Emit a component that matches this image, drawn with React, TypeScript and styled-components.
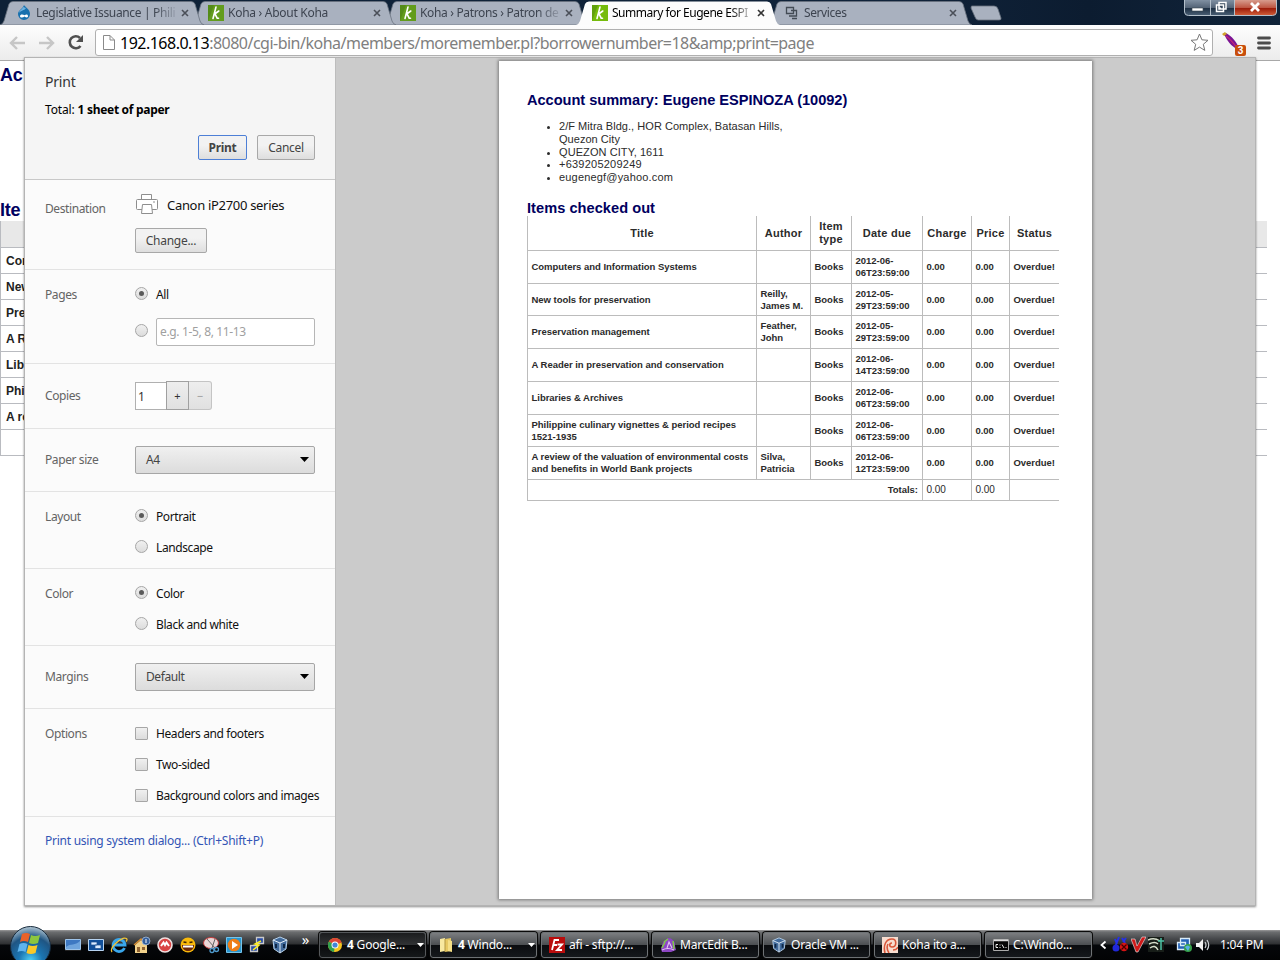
import React from "react";
import styled, { createGlobalStyle, css } from "styled-components";

const UI = `"Noto Sans", "Open Sans", sans-serif`;
const ARIAL = `"Liberation Sans", Arial, sans-serif`;

const GlobalStyle = createGlobalStyle`
  * { box-sizing: border-box; }
  body { margin: 0; background: #fff; font-family: ${UI}; font-size: 12px; overflow: hidden; }
  svg { display: block; flex: none; }
`;

const Screen = styled.div`
  position: relative;
  width: 1280px;
  height: 960px;
  display: flex;
  flex-direction: column;
  background: #fff;
  overflow: hidden;
`;

/* ---------- tab strip ---------- */
const TabStrip = styled.div`
  display: flex;
  height: 25px;
  flex: none;
  background: linear-gradient(90deg, #0e2137, #10233a 70%, #0c1c30 85%, #11243a);
`;
const Tab = styled.div<{ $z: number; $active?: boolean }>`
  position: relative;
  z-index: ${(p) => p.$z};
  display: flex;
  align-items: center;
  width: 204px;
  height: 25px;
  margin-right: -12px;
  padding: 1px 0 0 16px;
  color: ${(p) => (p.$active ? "#000" : "#3d4450")};
`;
const TabShape = styled.svg`
  position: absolute;
  left: 0;
  top: 0;
`;
const Favicon = styled.div`
  position: relative;
  display: flex;
  width: 16px;
  height: 16px;
  margin-right: 4px;
`;
const TabTitle = styled.div<{ $spacing?: number }>`
  position: relative;
  width: 139px;
  margin-right: 6px;
  overflow: hidden;
  white-space: nowrap;
  font-size: 12px;
  line-height: 18px;
  letter-spacing: ${(p) => p.$spacing ?? -0.2}px;
  mask-image: linear-gradient(90deg, #000 118px, transparent 144px);
`;
const NewTab = styled.svg`
  margin: 5px 0 0 10px;
`;
const WindowButtons = styled.svg`
  margin-left: auto;
  margin-right: 2px;
`;

/* ---------- toolbar ---------- */
const Toolbar = styled.div`
  display: flex;
  align-items: center;
  height: 36px;
  flex: none;
  padding: 0 8px 0 9px;
  background: linear-gradient(#fdfdfd, #ececec);
  border-bottom: 1px solid #a8a8a8;
`;
const NavIcons = styled.div`
  display: flex;
  gap: 12px;
  width: 86px;
  align-items: center;
`;
const AddressBar = styled.div`
  display: flex;
  align-items: center;
  width: 1118px;
  height: 27px;
  padding: 0 3px 0 7px;
  background: #fff;
  border: 1px solid #b0b0b0;
  border-radius: 3px;
`;
const Url = styled.div`
  flex: 1;
  margin-left: 5px;
  font-size: 16px;
  line-height: 24px;
  letter-spacing: -0.51px;
  white-space: nowrap;
  color: #808080;
  b { font-weight: 400; color: #000; }
`;
const Extensions = styled.div`
  display: flex;
  align-items: center;
  gap: 11px;
  margin-left: 9px;
`;
const ExtensionIcon = styled.svg`
  margin-top: 4px;
`;

/* ---------- page behind the dialog ---------- */
const BackPage = styled.div`
  flex: 1;
  width: 1267px;
  padding-top: 3px;
  font-family: ${ARIAL};
`;
const BackHeading = styled.div<{ $height: number }>`
  height: ${(p) => p.$height}px;
  font-size: 18px;
  font-weight: 700;
  line-height: 22px;
  letter-spacing: -0.3px;
  color: #00005f;
`;
const BackRow = styled.div<{ $head?: boolean }>`
  height: ${(p) => (p.$head ? 27 : 26)}px;
  padding-left: 5px;
  border-left: 1px solid #b9bbc0;
  border-bottom: 1px solid #b9bbc0;
  background: ${(p) => (p.$head ? "#e8e8e8" : "#fff")};
  font-size: 12px;
  font-weight: 700;
  line-height: 26px;
  color: #222;
`;

/* ---------- print dialog ---------- */
const Dialog = styled.div`
  position: absolute;
  left: 24px;
  top: 57px;
  width: 1232px;
  height: 849px;
  display: flex;
  background: #cbcbcb;
  border: 1px solid #b4b4b4;
  box-shadow: 0 1px 2px rgba(0, 0, 0, 0.45);
`;
const Settings = styled.div`
  width: 311px;
  flex: none;
  display: flex;
  flex-direction: column;
  background: #fbfbfb;
  border-right: 1px solid #bdbdbd;
`;
const SettingsHead = styled.div`
  height: 122px;
  padding: 14px 20px 0;
  background: #f5f5f5;
  border-bottom: 1px solid #c8c8c8;
`;
const Title = styled.div`
  font-size: 14px;
  line-height: 20px;
  letter-spacing: -0.2px;
  color: #333;
`;
const Total = styled.div`
  margin-top: 9px;
  line-height: 18px;
  letter-spacing: -0.15px;
  color: #000;
  b { font-weight: 700; letter-spacing: -0.3px; }
`;
const Buttons = styled.div`
  display: flex;
  justify-content: flex-end;
  gap: 10px;
  margin-top: 16px;
`;
const Button = styled.div<{ $width: number; $primary?: boolean }>`
  width: ${(p) => p.$width}px;
  height: 25px;
  border: 1px solid ${(p) => (p.$primary ? "#4d7fd6" : "#a8a8a8")};
  border-radius: 2px;
  background: linear-gradient(#f2f2f2 40%, #dedede);
  font-weight: ${(p) => (p.$primary ? 700 : 400)};
  line-height: 23px;
  letter-spacing: -0.27px;
  text-align: center;
  color: #444;
`;
const Section = styled.div<{ $height: number; $pad?: number }>`
  display: flex;
  flex: none;
  height: ${(p) => p.$height}px;
  padding: ${(p) => p.$pad ?? 9}px 0 0 20px;
  border-bottom: 1px solid #e3e3e3;
`;
const SectionLabel = styled.div<{ $line?: number }>`
  width: 90px;
  line-height: ${(p) => p.$line ?? 32}px;
  letter-spacing: -0.4px;
  color: #646464;
`;
const Stack = styled.div`
  display: flex;
  flex-direction: column;
`;
const Choice = styled.div<{ $height?: number }>`
  display: flex;
  align-items: center;
  gap: 8px;
  height: ${(p) => p.$height ?? 31}px;
  white-space: nowrap;
  color: #111;
`;
const ChoiceText = styled.span`
  letter-spacing: -0.4px;
`;
const controlFace = css`
  background: linear-gradient(#f0f0f0, #dcdcdc);
  border: 1px solid #a6a6a6;
`;
const RadioDot = styled.span<{ $on?: boolean }>`
  ${controlFace}
  display: flex;
  align-items: center;
  justify-content: center;
  width: 13px;
  height: 13px;
  margin-bottom: 2px;
  border-radius: 50%;
  &::after {
    content: "";
    width: 5px;
    height: 5px;
    border-radius: 50%;
    background: ${(p) => (p.$on ? "#5a5a5a" : "transparent")};
  }
`;
const CheckSquare = styled.span`
  ${controlFace}
  width: 13px;
  height: 13px;
  border-radius: 1px;
`;
const RangeInput = styled.div`
  width: 159px;
  height: 28px;
  margin-top: 2px;
  padding-left: 3px;
  border: 1px solid #b6b6b6;
  border-radius: 2px;
  background: #fff;
  line-height: 26px;
  letter-spacing: -0.35px;
  color: #a0a0a0;
`;
const Printer = styled.div`
  display: flex;
  align-items: center;
  gap: 9px;
  height: 22px;
  margin-bottom: 13px;
  font-size: 13px;
  letter-spacing: -0.31px;
  white-space: nowrap;
  color: #111;
`;
const PrinterName = styled.span`
  padding-top: 2px;
`;
const Stepper = styled.div`
  display: flex;
  height: 29px;
`;
const CopiesInput = styled.div`
  width: 31px;
  height: 28px;
  margin-top: 1px;
  padding-left: 2px;
  border: 1px solid #b0b0b0;
  border-right: 0;
  background: #fff;
  line-height: 27px;
  color: #333;
`;
const StepButton = styled.div<{ $off?: boolean }>`
  width: 23px;
  height: 29px;
  border: 1px solid ${(p) => (p.$off ? "#c4c4c4" : "#a0a0a0")};
  border-left-width: ${(p) => (p.$off ? 0 : 1)}px;
  border-radius: ${(p) => (p.$off ? "0 3px 3px 0" : 0)};
  background: linear-gradient(#eee, #e0e0e0);
  line-height: 28px;
  font-size: 11px;
  text-align: center;
  color: ${(p) => (p.$off ? "#999" : "#333")};
`;
const Select = styled.div`
  ${controlFace}
  display: flex;
  align-items: center;
  justify-content: space-between;
  width: 180px;
  height: 28px;
  padding: 0 5px 1px 10px;
  border-radius: 2px;
  letter-spacing: -0.4px;
  color: #444;
`;
const SystemLink = styled.div`
  padding: 15px 0 0 20px;
  line-height: 18px;
  letter-spacing: -0.25px;
  color: #3355b5;
`;

/* ---------- preview ---------- */
const Preview = styled.div`
  flex: 1;
  padding: 3px 0 0 163px;
`;
const Paper = styled.div`
  width: 593px;
  height: 838px;
  padding: 30px 28px 0;
  background: #fff;
  box-shadow: 0 0 3px 1px rgba(0, 0, 0, 0.4);
  font-family: ${ARIAL};
  color: #2b2b2b;
`;
const DocHeading = styled.div<{ $height: number; $spacing: number }>`
  height: ${(p) => p.$height}px;
  font-size: 14.6px;
  font-weight: 700;
  line-height: 18px;
  letter-spacing: ${(p) => p.$spacing}px;
  white-space: nowrap;
  color: #00005f;
`;
const Contact = styled.ul`
  height: 79px;
  margin: 0;
  padding: 0 0 0 32px;
  list-style: none;
  font-size: 11px;
  line-height: 12.8px;
`;
const ContactItem = styled.li<{ $spacing?: number }>`
  position: relative;
  white-space: pre;
  letter-spacing: ${(p) => p.$spacing ?? 0.18}px;
  &::before {
    content: "";
    position: absolute;
    left: -12px;
    top: 6px;
    width: 3px;
    height: 3px;
    border-radius: 50%;
    background: #2b2b2b;
  }
`;
const Row = styled.div<{ $height: number; $total?: boolean }>`
  display: grid;
  grid-template-columns: ${(p) => (p.$total ? "395px" : "229px 54px 41px 71px")} 49px 38px 50px;
  width: 532px;
  height: ${(p) => p.$height}px;
  border-bottom: 1px solid #bcbcbc;
`;
const Cell = styled.div<{ $head?: boolean; $plain?: boolean; $right?: boolean }>`
  display: flex;
  align-items: center;
  justify-content: ${(p) => (p.$head ? "center" : p.$right ? "flex-end" : "flex-start")};
  padding: ${(p) => (p.$head ? "0" : "0 4px 0 3.5px")};
  border-left: 1px solid #bcbcbc;
  font-size: ${(p) => (p.$head ? 11 : p.$plain ? 10 : 9.5)}px;
  font-weight: ${(p) => (p.$plain ? 400 : 700)};
  line-height: ${(p) => (p.$head ? 13 : 12)}px;
  letter-spacing: ${(p) => (p.$head ? 0.25 : -0.03)}px;
  text-align: ${(p) => (p.$head ? "center" : "left")};
  white-space: pre;
`;

/* ---------- taskbar ---------- */
const Taskbar = styled.div`
  position: relative;
  z-index: 1;
  display: flex;
  align-items: center;
  height: 30px;
  flex: none;
  background: linear-gradient(#9a9a9a 0, #6b6d6f 2px, #4a4c4f 8px, #2e3032 14px, #05070a 15px, #020304);
`;
const StartOrb = styled.svg`
  align-self: flex-end;
  margin: 0 12px 0 8px;
`;
const QuickLaunch = styled.div`
  display: flex;
  gap: 5px;
  width: 230px;
`;
const More = styled.div`
  width: 23px;
  margin-top: -12px;
  font-size: 15px;
  line-height: 16px;
  text-align: center;
  color: #fff;
`;
const Tasks = styled.div`
  display: flex;
  gap: 4px;
  margin-left: 2px;
`;
const Task = styled.div<{ $active?: boolean }>`
  display: flex;
  align-items: center;
  gap: 4px;
  width: 107px;
  height: 26px;
  padding-left: 7px;
  border: 1px solid ${(p) => (p.$active ? "#55585b" : "#6e7275")};
  border-radius: 3px;
  background: ${(p) =>
    p.$active
      ? "linear-gradient(#1b1c1e, #303234 48%, #0a0b0d 52%, #15181a)"
      : "linear-gradient(#7b7d80, #4d5053 48%, #0b0d10 52%, #15181c)"};
  box-shadow: 0 0 0 1px #0a0a0a;
  white-space: nowrap;
  color: #fff;
`;
const TaskText = styled.span`
  padding-bottom: 1px;
  letter-spacing: -0.2px;
`;
const TaskArrow = styled.svg`
  margin-left: auto;
  margin-right: 1px;
`;
const Tray = styled.div`
  display: flex;
  align-items: center;
  gap: 2px;
  margin-left: 7px;
  color: #fff;
`;
const Clock = styled.div`
  margin-left: 7px;
  line-height: 18px;
  white-space: nowrap;
  letter-spacing: -0.25px;
`;

/* ---------- icons ---------- */
const DrupalIcon = () => (
  <svg width="16" height="16" viewBox="0 0 16 16">
    <path d="M8 0c1 2 6 4 6 9a6 6 0 0 1-12 0c0-4 5-5 6-9z" fill="#1770ae" />
    <path d="M7 2c0 2-4 3-4 6 2-3 5-2 7-5z" fill="#6fb3e0" />
    <path d="M4 11c0-2 3-2 4.500-.8C10 9 12 9 12 11s-2 1.500-3.500.5C7 13 4 13 4 11z" fill="#fff" />
  </svg>
);
const KohaIcon = ({ bright }: { bright?: boolean }) => (
  <svg width="16" height="16" viewBox="0 0 16 16">
    <rect width="16" height="16" fill={bright ? "#76bc0c" : "#629c1c"} />
    <path d="M0 16L6 0H0z" fill="#3c6e10" opacity=".35" />
    <path d="M8 2L5 13.500M6 9.500L10.800 6M7 8.800L9.200 13.200h1.300" stroke="#fff" strokeWidth="1.600" fill="none" strokeLinecap="round" />
  </svg>
);
const ServicesIcon = () => (
  <svg width="16" height="16" viewBox="0 0 16 16" fill="none" stroke="#434b55" strokeWidth="1.300">
    <path d="M2.500 2.500h7v6h-7zM7 5.500h5.500v5.500H7M5 11h2M8 13.500h5" />
  </svg>
);
const CloseIcon = ({ dark }: { dark?: boolean }) => (
  <svg width="8" height="8" viewBox="0 0 8 8" style={{ position: "relative" }}>
    <path d="M1 1l6 6M7 1L1 7" stroke={dark ? "#333" : "#4a4f58"} strokeWidth="1.600" />
  </svg>
);
const PrinterIcon = () => (
  <svg width="23" height="22" viewBox="0 0 23 22" fill="#fff" stroke="#8e8e8e">
    <path d="M6.500 6.500v-5h10v5" />
    <rect x="1.500" y="6.500" width="21" height="10" rx="1" />
    <path d="M7.500 11.500h9l1 9h-11z" />
    <path d="M18 9h2" />
  </svg>
);
const Cube = ({ size = 18 }: { size?: number }) => (
  <svg width={size} height={size} viewBox="0 0 18 18">
    <path d="M9 1l7 3-1 9-6 4-6-4L2 4z" fill="#416a9b" stroke="#b9d3ec" />
    <path d="M2 4l7 3 7-3M9 7v10" stroke="#e5f0fa" fill="none" />
    <path d="M5 8v4M13 8v4" stroke="#0d2748" strokeWidth="2" />
  </svg>
);
const quick = [
  <svg key="desk" width="18" height="18" viewBox="0 0 18 18"><path d="M1.500 3.500h15v10h-15z" fill="#3e78c2" stroke="#9ec4ea" /><path d="M2 11c5-4 9-1 14-6v8H2z" fill="#6fa4dd" /><path d="M1 14.500h16" stroke="#222" /></svg>,
  <svg key="switch" width="18" height="18" viewBox="0 0 18 18"><path d="M1.500 3.500h15v11h-15z" fill="#11509b" stroke="#b7d3f0" /><path d="M4 6h6v3H4zM8 9h6v3.500H8z" fill="#dcecff" stroke="#1b4d8c" strokeWidth=".7" /></svg>,
  <svg key="ie" width="18" height="18" viewBox="0 0 18 18" fill="none"><path d="M14.500 12a6 6 0 1 1 .5-3H4.500" stroke="#39a7ec" strokeWidth="2.800" /><path d="M2 16C-1 12 12 0 16.500 2.500c1 .7.300 2-.5 3" stroke="#f2c537" strokeWidth="1.300" /></svg>,
  <svg key="home" width="18" height="18" viewBox="0 0 18 18"><path d="M2 9l6-5 6 5v8H2z" fill="#f2d28b" /><path d="M1 9l7-6 6 6" stroke="#d48c32" fill="none" strokeWidth="1.500" /><path d="M4 11h3v5H4zM9 11h3v3H9z" fill="#8f6331" /><circle cx="13" cy="5" r="4" fill="#345f9c" stroke="#b4cce8" strokeWidth=".7" /><path d="M13 3v4" stroke="#fff" /></svg>,
  <svg key="red" width="18" height="18" viewBox="0 0 18 18"><circle cx="9" cy="9" r="7" fill="#d94343" stroke="#efdfdf" strokeWidth="1.600" /><path d="M5 10l2.500-3.500L9 9l1.500-2.500L13 10" stroke="#fff" strokeWidth="2" fill="none" /></svg>,
  <svg key="smile" width="18" height="18" viewBox="0 0 18 18"><circle cx="9" cy="9" r="7.500" fill="#f8b90b" /><path d="M3 9h12c0 8-12 8-12 0z" fill="#6e2808" /><path d="M4 9.500h10v2H4z" fill="#fff" /><path d="M4.500 6l3 .5M13.500 6l-3 .5" stroke="#3d2205" strokeWidth="1.500" /></svg>,
  <svg key="snip" width="18" height="18" viewBox="0 0 18 18"><ellipse cx="9" cy="7" rx="7.500" ry="5.500" fill="#ead7d7" stroke="#c33c3c" /><path d="M5 3l8 9M13 3l-3 9" stroke="#666" /><circle cx="10" cy="14.500" r="2" fill="none" stroke="#4f9acc" strokeWidth="1.300" /><circle cx="14.500" cy="13.500" r="2" fill="none" stroke="#4f9acc" strokeWidth="1.300" /></svg>,
  <svg key="play" width="18" height="18" viewBox="0 0 18 18"><path d="M1.500 1.500h15v15h-15z" fill="#2995cf" stroke="#75c4eb" /><circle cx="9" cy="9" r="6.300" fill="#ee7d17" /><path d="M7 5l6 4-6 4z" fill="#fff" /></svg>,
  <svg key="putty" width="18" height="18" viewBox="0 0 18 18"><path d="M8.500 1.500h7v6h-7zM2.500 9.500h7v6h-7z" fill="#284da8" stroke="#c9c9c9" strokeWidth="1.300" /><path d="M13 5L7 8l4 1-6 5" stroke="#ffed22" fill="none" strokeWidth="1.500" /></svg>,
  <Cube key="cube" />,
];
const ChromeIcon = () => (
  <svg width="16" height="16" viewBox="0 0 16 16">
    <circle cx="8" cy="8" r="7" fill="#f4c420" />
    <path d="M8 8L1.900 4.500A7 7 0 0 1 14.600 5.500z" fill="#dc4537" />
    <path d="M8 8L1.900 4.500A7 7 0 0 0 7 14.900z" fill="#2fa14f" />
    <circle cx="8" cy="8" r="3.500" fill="#fff" />
    <circle cx="8" cy="8" r="2.600" fill="#4285d8" />
  </svg>
);
const FolderIcon = () => (
  <svg width="16" height="16" viewBox="0 0 16 16">
    <path d="M2 2l5-1v13l-5 1z" fill="#f8e9a0" /><path d="M7 2l6-1v13l-6 1z" fill="#e7c962" /><path d="M7 2v13" stroke="#b39842" /><path d="M10 3l4 1v11l-4-1z" fill="#f5df86" />
  </svg>
);
const FzIcon = () => (
  <svg width="16" height="16" viewBox="0 0 16 16">
    <rect width="16" height="16" fill="#b90d0d" />
    <path d="M3 13L5.500 3H10M4 8h4M8.500 7.500H13L8 13h5" stroke="#fff" strokeWidth="1.800" fill="none" />
  </svg>
);
const MarcIcon = () => (
  <svg width="16" height="16" viewBox="0 0 16 16">
    <path d="M8 1a7 7 0 0 1 7 8l1 4-5 2H2l-1-3 2-7z" fill="#8d46c4" />
    <path d="M4 5l4-3M2 11l3-6M13 4l1 8" stroke="#7fce45" strokeWidth="1.500" fill="none" />
    <path d="M7 11l2-6 3 6M2 13q6-3 12 0" stroke="#e3c4f4" strokeWidth="1.100" fill="none" />
  </svg>
);
const SwirlIcon = () => (
  <svg width="16" height="16" viewBox="0 0 16 16">
    <rect width="16" height="16" fill="#f7ddd0" /><path d="M3 16C1 8 4 2 10 2c5 0 5 8 0 8-3 0-3-4 0-4M7 16c-2-3-2-7-1-9M11 13c2 0 4-1 5-3" stroke="#d9573a" strokeWidth="1.600" fill="none" />
  </svg>
);
const CmdIcon = () => (
  <svg width="16" height="16" viewBox="0 0 16 16">
    <path d="M.5 2.500h15v11H.5z" fill="#050505" stroke="#aaa" /><path d="M1 3.500h14" stroke="#ddd" strokeWidth="1.500" /><path d="M5 7.500H3v3h2M7 7.500v1M7 10v1M9 7.500l2 3.500M13 10v1" stroke="#eee" fill="none" />
  </svg>
);

const tabs = [
  { title: "Legislative Issuance | Phili", icon: <DrupalIcon />, spacing: -0.35 },
  { title: "Koha › About Koha", icon: <KohaIcon />, spacing: -0.28 },
  { title: "Koha › Patrons › Patron de", icon: <KohaIcon />, spacing: -0.34 },
  { title: "Summary for Eugene ESPI", icon: <KohaIcon bright />, spacing: -0.48, active: true },
  { title: "Services", icon: <ServicesIcon />, spacing: -0.4 },
];
const backRows = ["Con", "New", "Pre", "A R", "Libr", "Phil", "A re", ""];
const loans = [
  { h: 33, title: "Computers and Information Systems", author: "", due: "2012-06-\n06T23:59:00" },
  { h: 32, title: "New tools for preservation", author: "Reilly,\nJames M.", due: "2012-05-\n29T23:59:00" },
  { h: 33, title: "Preservation management", author: "Feather,\nJohn", due: "2012-05-\n29T23:59:00" },
  { h: 33, title: "A Reader in preservation and conservation", author: "", due: "2012-06-\n14T23:59:00" },
  { h: 33, title: "Libraries & Archives", author: "", due: "2012-06-\n06T23:59:00" },
  { h: 32, title: "Philippine culinary vignettes & period recipes\n1521-1935", author: "", due: "2012-06-\n06T23:59:00" },
  { h: 33, title: "A review of the valuation of environmental costs\nand benefits in World Bank projects", author: "Silva,\nPatricia", due: "2012-06-\n12T23:59:00" },
];
const tasks = [
  { icon: <ChromeIcon />, count: "4", text: "Google...", active: true, arrow: true },
  { icon: <FolderIcon />, count: "4", text: "Windo...", arrow: true },
  { icon: <FzIcon />, text: "afi - sftp://..." },
  { icon: <MarcIcon />, text: "MarcEdit B..." },
  { icon: <Cube size={16} />, text: "Oracle VM ..." },
  { icon: <SwirlIcon />, text: "Koha ito a..." },
  { icon: <CmdIcon />, text: "C:\\Windo..." },
];

const Radio = ({ on, label }: { on?: boolean; label: string }) => (
  <Choice>
    <RadioDot $on={on} />
    <ChoiceText>{label}</ChoiceText>
  </Choice>
);
const Check = ({ label }: { label: string }) => (
  <Choice>
    <CheckSquare />
    <ChoiceText>{label}</ChoiceText>
  </Choice>
);
const Dropdown = ({ value }: { value: string }) => (
  <Select>
    {value}
    <svg width="9" height="5" viewBox="0 0 9 5"><path d="M0 0h9L4.500 5z" fill="#000" /></svg>
  </Select>
);

export default function App() {
  return (
    <>
      <GlobalStyle />
      <Screen>
        <TabStrip>
          {tabs.map((t, i) => (
            <Tab key={t.title} $z={t.active ? 9 : 6 - i} $active={t.active}>
              <TabShape width="204" height="25" viewBox="0 0 204 25">
                <path
                  d="M0 25Q3 24 4 21L9 4Q10 1.500 13 1.500H191Q194 1.500 195 4L200 21Q201 24 204 25Z"
                  fill={t.active ? "#fcfcfc" : "#a9b1bf"}
                  stroke={t.active ? "#fff" : "#69727f"}
                  strokeWidth={t.active ? 0 : 0.8}
                />
              </TabShape>
              <Favicon>{t.icon}</Favicon>
              <TabTitle $spacing={t.spacing}>{t.title}</TabTitle>
              <CloseIcon dark={t.active} />
            </Tab>
          ))}
          <NewTab width="32" height="16" viewBox="0 0 32 16">
            <path d="M1.500 1H24q3 0 4 3l3 9q.5 2-2 2H8q-2 0-3-3L1 3z" fill="#a9b1bf" stroke="#69727f" strokeWidth=".8" />
          </NewTab>
          <WindowButtons width="95" height="18" viewBox="0 0 95 18">
            <defs>
              <linearGradient id="glass" x1="0" x2="0" y1="0" y2="1">
                <stop offset="0" stopColor="#8090a2" /><stop offset=".5" stopColor="#536376" /><stop offset=".55" stopColor="#1e3044" /><stop offset="1" stopColor="#4b6076" />
              </linearGradient>
              <linearGradient id="red" x1="0" x2="0" y1="0" y2="1">
                <stop offset="0" stopColor="#d79c8d" /><stop offset=".5" stopColor="#bd5541" /><stop offset=".55" stopColor="#9d1d0a" /><stop offset="1" stopColor="#d3603b" />
              </linearGradient>
            </defs>
            <path d="M1.500 0v12q0 3.500 4 3.500H27.500V0z" fill="url(#glass)" />
            <path d="M27.500 0h24v15.500h-24z" fill="url(#glass)" />
            <path d="M51.500 0h42v12q0 3.500-4 3.500h-38z" fill="url(#red)" />
            <path d="M1.500 0v12q0 3.500 4 3.500h84q4 0 4-3.500V0M27.500 0v15M51.500 0v15" fill="none" stroke="#b4c0cb" />
            <path d="M9 8h11v3H9z" fill="#fff" stroke="#3b4652" strokeWidth=".6" />
            <path d="M36 2.500h7v6.500h-7zM33.500 5h7v6.500h-7z" fill="#36485b" stroke="#fff" strokeWidth="1.500" />
            <path d="M36 7.500h2v1.500h-2z" fill="#fff" />
            <path d="M68 3l8 8M76 3l-8 8" stroke="#fff" strokeWidth="2.800" />
          </WindowButtons>
        </TabStrip>

        <Toolbar>
          <NavIcons>
            <svg width="17" height="16" viewBox="0 0 17 16" fill="none" stroke="#c6c6c6" strokeWidth="2.400"><path d="M16 8H3M8 2L2 8l6 6" /></svg>
            <svg width="17" height="16" viewBox="0 0 17 16" fill="none" stroke="#c6c6c6" strokeWidth="2.400"><path d="M1 8h13M9 2l6 6-6 6" /></svg>
            <svg width="18" height="17" viewBox="0 0 18 17"><path d="M13.500 12A6 6 0 1 1 13 4" fill="none" stroke="#505050" strokeWidth="2.600" /><path d="M16 1v7H9z" fill="#505050" /></svg>
          </NavIcons>
          <AddressBar>
            <svg width="12" height="15" viewBox="0 0 12 15" fill="#fff" stroke="#8a8a8a"><path d="M.5.500h6.500l4.500 4.500v9.500H.5zM7 .5V5h4.500" /></svg>
            <Url><b>192.168.0.13</b>{":8080/cgi-bin/koha/members/moremember.pl?borrowernumber=18&amp;print=page"}</Url>
            <svg width="19" height="19" viewBox="0 0 19 19"><path d="M9.500 1l2.400 5.800 6.100.5-4.700 4 1.500 6.100-5.300-3.300-5.300 3.300 1.500-6.100-4.700-4 6.100-.5z" fill="#fff" stroke="#777" /></svg>
          </AddressBar>
          <Extensions>
            <ExtensionIcon width="24" height="25" viewBox="0 0 24 25">
              <path d="M1 2l3-1c5 3 12 9 13 17-5-2-11-7-14-14z" fill="#7a1494" /><path d="M4 4c4 3 8 8 11 12" stroke="#c0267d" strokeWidth="1.500" /><path d="M0 2l3-2 2 2-3 2z" fill="#d0a12c" />
              <rect x="13" y="13" width="11" height="11" rx="2" fill="#c84e0c" />
              <text x="18.500" y="22" fontFamily="Liberation Sans, sans-serif" fontSize="10" fontWeight="700" fill="#fff" textAnchor="middle">3</text>
            </ExtensionIcon>
            <svg width="14" height="14" viewBox="0 0 14 14"><path d="M1.500 2h11M1.500 7h11M1.500 12h11" stroke="#4c4c4c" strokeWidth="2.800" strokeLinecap="round" /></svg>
          </Extensions>
        </Toolbar>

        <BackPage>
          <BackHeading $height={135}>Ac</BackHeading>
          <BackHeading $height={22}>Ite</BackHeading>
          <BackRow $head />
          {backRows.map((r, i) => <BackRow key={i}>{r}</BackRow>)}
        </BackPage>

        <Dialog>
          <Settings>
            <SettingsHead>
              <Title>Print</Title>
              <Total>Total: <b>1 sheet of paper</b></Total>
              <Buttons>
                <Button $width={49} $primary>Print</Button>
                <Button $width={58}>Cancel</Button>
              </Buttons>
            </SettingsHead>
            <Section $height={90} $pad={13}>
              <SectionLabel>Destination</SectionLabel>
              <Stack>
                <Printer><PrinterIcon /><PrinterName>Canon iP2700 series</PrinterName></Printer>
                <Button $width={72}>Change...</Button>
              </Stack>
            </Section>
            <Section $height={94}>
              <SectionLabel>Pages</SectionLabel>
              <Stack>
                <Radio on label="All" />
                <Choice $height={42}><RadioDot /><RangeInput>e.g. 1-5, 8, 11-13</RangeInput></Choice>
              </Stack>
            </Section>
            <Section $height={65} $pad={17}>
              <SectionLabel $line={30}>Copies</SectionLabel>
              <Stepper>
                <CopiesInput>1</CopiesInput>
                <StepButton>+</StepButton>
                <StepButton $off>−</StepButton>
              </Stepper>
            </Section>
            <Section $height={63} $pad={17}>
              <SectionLabel $line={28}>Paper size</SectionLabel>
              <Dropdown value="A4" />
            </Section>
            <Section $height={77}>
              <SectionLabel>Layout</SectionLabel>
              <Stack><Radio on label="Portrait" /><Radio label="Landscape" /></Stack>
            </Section>
            <Section $height={77}>
              <SectionLabel>Color</SectionLabel>
              <Stack><Radio on label="Color" /><Radio label="Black and white" /></Stack>
            </Section>
            <Section $height={63} $pad={17}>
              <SectionLabel $line={28}>Margins</SectionLabel>
              <Dropdown value="Default" />
            </Section>
            <Section $height={108}>
              <SectionLabel>Options</SectionLabel>
              <Stack>
                <Check label="Headers and footers" />
                <Check label="Two-sided" />
                <Check label="Background colors and images" />
              </Stack>
            </Section>
            <SystemLink>Print using system dialog... (Ctrl+Shift+P)</SystemLink>
          </Settings>

          <Preview>
            <Paper>
              <DocHeading $height={29} $spacing={-0.03}>Account summary: Eugene ESPINOZA (10092)</DocHeading>
              <Contact>
                <ContactItem $spacing={0.04}>{"2/F Mitra Bldg., HOR Complex, Batasan Hills,\nQuezon City"}</ContactItem>
                <ContactItem $spacing={0.08}>QUEZON CITY, 1611</ContactItem>
                <ContactItem $spacing={0.23}>+639205209249</ContactItem>
                <ContactItem>eugenegf@yahoo.com</ContactItem>
              </Contact>
              <DocHeading $height={17} $spacing={0.04}>Items checked out</DocHeading>
              <Row $height={35}>
                {["Title", "Author", "Item\ntype", "Date due", "Charge", "Price", "Status"].map((h) => <Cell key={h} $head>{h}</Cell>)}
              </Row>
              {loans.map((l) => (
                <Row key={l.title} $height={l.h}>
                  <Cell>{l.title}</Cell>
                  <Cell>{l.author}</Cell>
                  <Cell>Books</Cell>
                  <Cell>{l.due}</Cell>
                  <Cell>0.00</Cell>
                  <Cell>0.00</Cell>
                  <Cell>Overdue!</Cell>
                </Row>
              ))}
              <Row $height={21} $total>
                <Cell $right>Totals:</Cell>
                <Cell $plain>0.00</Cell>
                <Cell $plain>0.00</Cell>
                <Cell />
              </Row>
            </Paper>
          </Preview>
        </Dialog>

        <Taskbar>
          <StartOrb width="44" height="34" viewBox="0 0 44 34">
            <defs>
              <radialGradient id="orb" cx=".5" cy=".85" r=".85">
                <stop offset="0" stopColor="#4fd0f5" /><stop offset=".35" stopColor="#1b75b2" /><stop offset=".7" stopColor="#1f5583" /><stop offset="1" stopColor="#b4c8d5" />
              </radialGradient>
            </defs>
            <circle cx="22.500" cy="20.500" r="20" fill="url(#orb)" stroke="#16293b" />
            <path d="M14 8q4-2 8 0l-2 8q-4-2-8 0z" fill="#e8622a" />
            <path d="M23 9q4 2 9 0l-2 8q-5 2-9 0z" fill="#8cc63e" />
            <path d="M11.500 18q4-2 8 0l-2 8q-4-2-8 0z" fill="#5fb4ee" />
            <path d="M20.500 19q4 2 9 0l-2 8q-5 2-9 0z" fill="#fbc928" />
          </StartOrb>
          <QuickLaunch>{quick}</QuickLaunch>
          <More>»</More>
          <Tasks>
            {tasks.map((t) => (
              <Task key={t.text} $active={t.active}>
                {t.icon}
                <TaskText>{t.count ? <b>{t.count} </b> : null}{t.text}</TaskText>
                {t.arrow && <TaskArrow width="7" height="4" viewBox="0 0 7 4"><path d="M0 0h7L3.500 4z" fill="#fff" /></TaskArrow>}
              </Task>
            ))}
          </Tasks>
          <Tray>
            <svg width="8" height="10" viewBox="0 0 8 10"><path d="M6.500 1.500L2.500 5l4 3.500" stroke="#fff" strokeWidth="1.800" fill="none" /></svg>
            <svg width="20" height="18" viewBox="0 0 20 18"><path d="M6 3l2 5M10 1L6 11M13 2l3 5M17 2l-3 4" stroke="#2430e9" strokeWidth="2" /><circle cx="7" cy="12" r="3.500" fill="#2028d8" /><circle cx="15" cy="11" r="4.200" fill="#d41414" /><path d="M12.500 8.500l5 5M17.500 8.500l-5 5" stroke="#400" strokeWidth="1.200" /></svg>
            <svg width="15" height="18" viewBox="0 0 15 18"><path d="M0 3h4l2 7 5-9h4L7 16H5z" fill="#d01a1a" stroke="#eee" strokeWidth=".6" /></svg>
            <svg width="16" height="18" viewBox="0 0 16 18"><path d="M0 1h16v15H0z" fill="#171d18" /><path d="M0 4q6-3 12 1M1 8q6-3 9 0M2 12q5-4 8 2" stroke="#d7dfcc" strokeWidth="1.500" fill="none" /><path d="M13 2v12M10 5h6" stroke="#4dc1a5" strokeWidth="1.500" /></svg>
            <svg width="18" height="18" viewBox="0 0 18 18" style={{ marginLeft: 9 }}><path d="M5.500 2.500h9v7h-9zM2.500 6.500h8v7h-8z" fill="#2463b7" stroke="#d9ebf8" strokeWidth="1.300" /><circle cx="13" cy="12" r="4" fill="#37a04a" /><path d="M10 11q3-3 5 0l-2 4" fill="#56aee8" /></svg>
            <svg width="16" height="16" viewBox="0 0 16 16"><path d="M1 6h3l4-4v12l-4-4H1z" fill="#f2f2f2" /><path d="M10 5q2 3 0 6M12 3q3.500 5 0 10" stroke="#cfd4d8" fill="none" strokeWidth="1.200" /></svg>
            <Clock>1:04 PM</Clock>
          </Tray>
        </Taskbar>
      </Screen>
    </>
  );
}
